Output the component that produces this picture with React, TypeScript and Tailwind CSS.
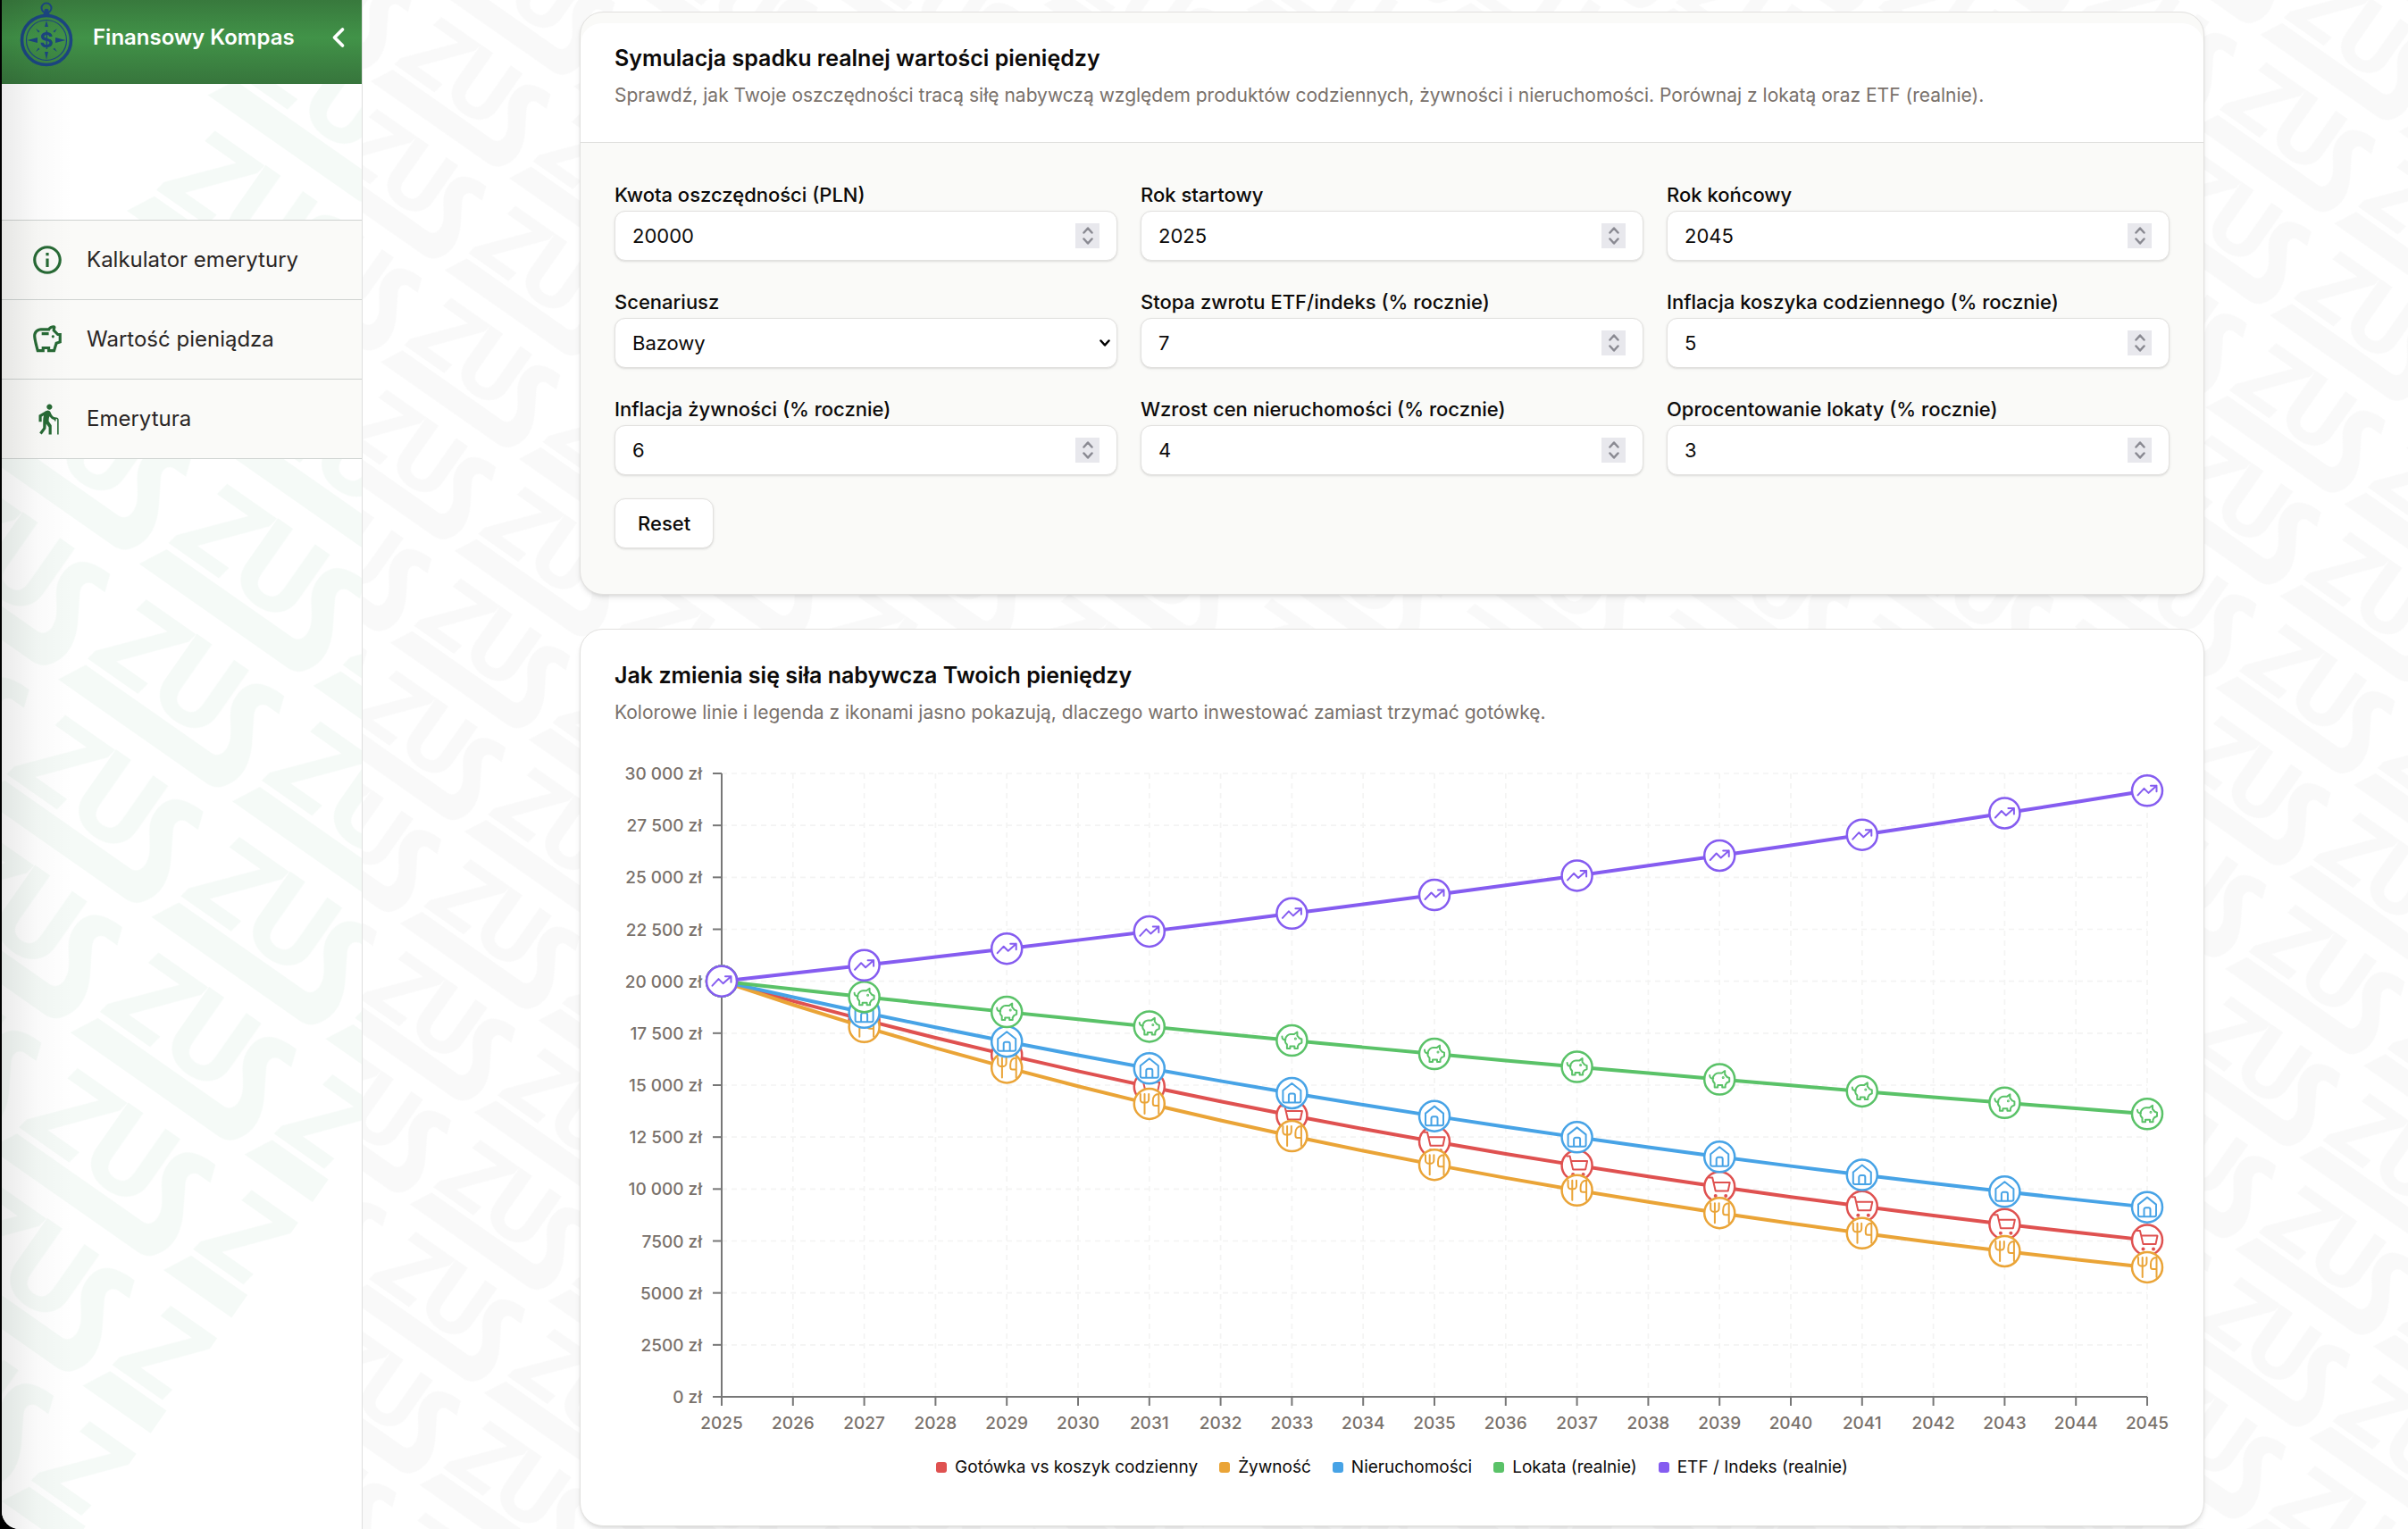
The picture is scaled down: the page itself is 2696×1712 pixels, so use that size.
import { useState } from "react";
import type { ReactNode } from "react";
import { ChevronLeft } from "lucide-react";
import { MdElderly, MdInfoOutline, MdOutlineSavings } from "react-icons/md";

/* ---------- Watermark ---------- */

function WatermarkMark() {
  return (
    <g transform="translate(34 10)">
      <text x="-14" y="92" className="font-[Roboto] text-[129px] font-extrabold italic">
        Z
      </text>
      <text x="61" y="92" className="font-[Roboto] text-[129px] font-extrabold">
        U
      </text>
      <path d="M-14 99H158C168 99 172 88 166 74C158 58 144 50 144 31C144 8 158 -1 188 0L195 20H180C171 20 168 28 172 36L190 66C199 82 202 98 196 112C190 125 184 130 172 130H-30Z" />
    </g>
  );
}

function SidebarWatermark() {
  return (
    <svg aria-hidden="true" className="pointer-events-none absolute inset-0 h-full w-full fill-[#f5faf7]">
      <defs>
        <pattern id="mark-green" x="484" y="289" width="238" height="158" patternUnits="userSpaceOnUse">
          <WatermarkMark />
        </pattern>
      </defs>
      <g transform="rotate(35)">
        <rect x="243" y="-300" width="814" height="2000" fill="url(#mark-green)" />
      </g>
    </svg>
  );
}

function PageWatermark() {
  return (
    <svg aria-hidden="true" className="pointer-events-none absolute inset-0 h-full w-full fill-[#f9f9f9]">
      <defs>
        <pattern
          id="mark-grey"
          x="547"
          y="421"
          width="238"
          height="158"
          patternUnits="userSpaceOnUse"
          patternTransform="rotate(35) scale(0.795)"
        >
          <WatermarkMark />
        </pattern>
      </defs>
      <rect width="100%" height="100%" fill="url(#mark-grey)" />
    </svg>
  );
}

/* ---------- Sidebar ---------- */

function CompassLogo() {
  return (
    <svg viewBox="0 0 60 76" className="h-[76px] w-[60px] shrink-0 text-[#1b4580]" aria-hidden="true">
      <g fill="none" stroke="currentColor">
        <circle cx="30" cy="9" r="5.500" strokeWidth="2" />
        <circle cx="30" cy="45" r="27.500" strokeWidth="3.600" />
        <circle cx="30" cy="45" r="22.500" strokeWidth="1.200" />
      </g>
      <g fill="currentColor">
        <path d="M27.500 11a3 3 0 0 1 5 0v3l2.500 4H25l2.500-4z" />
        <path d="M30 23l2 7h-4zM30 67l2-9h-4zM8.500 45l11.500-3v6zM51.500 45l-11.500-3v6z" />
        <path d="M18 32l4.500 3-1.500 1.500zM42 32l-4.500 3 1.500 1.500zM18 58l4.500-3-1.500-1.500zM42 58l-4.500-3 1.500-1.500z" />
        <text x="30" y="53" textAnchor="middle" className="font-[Inter] text-[23px] font-bold">
          $
        </text>
      </g>
    </svg>
  );
}

const menu: { label: string; icon: ReactNode }[] = [
  { label: "Kalkulator emerytury", icon: <MdInfoOutline /> },
  { label: "Wartość pieniądza", icon: <MdOutlineSavings /> },
  { label: "Emerytura", icon: <MdElderly /> },
];

function Sidebar() {
  return (
    <aside className="relative w-[404px] shrink-0 border-r border-[#dedfde] bg-white">
      <SidebarWatermark />
      <div className="relative flex h-[94px] items-start bg-gradient-to-b from-[#38793d] via-[#419348] via-45% to-[#37753c] pr-2 pl-5">
        <CompassLogo />
        <div className="ml-[22px] flex h-[83px] flex-1 items-center justify-between">
          <span className="text-[24px] font-semibold whitespace-nowrap text-white">Finansowy Kompas</span>
          <button type="button" aria-label="Zwiń menu" className="text-white">
            <ChevronLeft className="size-9" strokeWidth={2.500} />
          </button>
        </div>
      </div>
      <nav className="relative mt-[152px] border-t border-[#cfd3d1]">
        {menu.map((m) => (
          <a
            key={m.label}
            href="#"
            className="flex h-[89px] items-center gap-[25px] border-b border-[#cfd3d1] bg-[#fafaf8] pl-8 text-[24px] text-[#292524]"
          >
            <span className="text-[38px] text-[#276a35]">{m.icon}</span>
            {m.label}
          </a>
        ))}
      </nav>
      <div className="pointer-events-none absolute inset-y-0 left-0 w-20 bg-gradient-to-r from-black/8 via-black/2 to-transparent" />
    </aside>
  );
}

/* ---------- Form ---------- */

function Caret({ up = false }: { up?: boolean }) {
  return (
    <svg
      viewBox="0 0 12 8"
      className="block h-2 w-3"
      fill="none"
      stroke="currentColor"
      strokeWidth="2.500"
      strokeLinecap="round"
      strokeLinejoin="round"
      aria-hidden="true"
    >
      <path d={up ? "M1.500 6.500L6 1.500 10.500 6.500" : "M1.500 1.500L6 6.500 10.500 1.500"} />
    </svg>
  );
}

const control =
  "h-14 w-full rounded-xl border border-[#e2e1df] bg-white px-[19px] text-[22px] text-[#0c0a09] shadow-sm outline-none";

function NumberField({ id, label, initial }: { id: string; label: string; initial: number }) {
  const [value, setValue] = useState(initial);
  return (
    <div className="flex flex-col gap-[6px]">
      <label htmlFor={id} className="text-[22px] leading-6 font-medium text-[#0c0a09]">
        {label}
      </label>
      <div className="relative">
        <input
          id={id}
          type="number"
          value={value}
          onChange={(e) => setValue(Number(e.target.value))}
          className={`${control} [appearance:textfield] [&::-webkit-inner-spin-button]:appearance-none`}
        />
        <div className="absolute inset-y-[14px] right-5 flex w-[27px] flex-col items-center justify-center gap-1 bg-[#e8e8ed] text-[#8a8a92]">
          <button type="button" aria-label={`${label}: zwiększ`} onClick={() => setValue(value + 1)}>
            <Caret up />
          </button>
          <button type="button" aria-label={`${label}: zmniejsz`} onClick={() => setValue(value - 1)}>
            <Caret />
          </button>
        </div>
      </div>
    </div>
  );
}

function ScenarioField() {
  return (
    <div className="flex flex-col gap-[6px]">
      <label htmlFor="scenario" className="text-[22px] leading-6 font-medium text-[#0c0a09]">
        Scenariusz
      </label>
      <div className="relative">
        <select id="scenario" className={`${control} appearance-none`}>
          <option>Bazowy</option>
          <option>Optymistyczny</option>
          <option>Pesymistyczny</option>
        </select>
        <div className="pointer-events-none absolute inset-y-0 right-2 flex items-center text-black">
          <Caret />
        </div>
      </div>
    </div>
  );
}

function SimulationCard() {
  return (
    <section className="rounded-[26px] border border-[#e2e1df] bg-[#fafaf8] pt-3 shadow-md">
      <header className="rounded-t-[24px] border-b border-[#e0e0de] bg-white px-[38px] pt-[26px] pb-[36px]">
        <h2 className="text-[25px] leading-[26px] font-semibold text-[#0c0a09]">
          Symulacja spadku realnej wartości pieniędzy
        </h2>
        <p className="mt-[13px] text-[21px] leading-8 text-[#79716b]">
          Sprawdź, jak Twoje oszczędności tracą siłę nabywczą względem produktów codziennych, żywności i nieruchomości.
          Porównaj z lokatą oraz ETF (realnie).
        </p>
      </header>
      <form className="px-[38px] pt-[46px] pb-[51px]" onSubmit={(e) => e.preventDefault()}>
        <div className="grid grid-cols-3 gap-x-[26px] gap-y-[34px]">
          <NumberField id="amount" label="Kwota oszczędności (PLN)" initial={20000} />
          <NumberField id="start" label="Rok startowy" initial={2025} />
          <NumberField id="end" label="Rok końcowy" initial={2045} />
          <ScenarioField />
          <NumberField id="etf" label="Stopa zwrotu ETF/indeks (% rocznie)" initial={7} />
          <NumberField id="basket" label="Inflacja koszyka codziennego (% rocznie)" initial={5} />
          <NumberField id="food" label="Inflacja żywności (% rocznie)" initial={6} />
          <NumberField id="property" label="Wzrost cen nieruchomości (% rocznie)" initial={4} />
          <NumberField id="deposit" label="Oprocentowanie lokaty (% rocznie)" initial={3} />
        </div>
        <button
          type="reset"
          className="mt-[26px] h-14 rounded-xl border border-[#e2e1df] bg-white px-[25px] text-[22px] font-medium text-[#0c0a09] shadow-sm"
        >
          Reset
        </button>
      </form>
    </section>
  );
}

/* ---------- Chart ---------- */

const START = 2025;
const YEARS = Array.from({ length: 21 }, (_, i) => i);
const LEFT = 120;
const RIGHT = 1716;
const TOP = 26;
const BOTTOM = 724;
const MAX = 30000;

const px = (i: number) => LEFT + ((RIGHT - LEFT) * i) / 20;
const py = (v: number) => BOTTOM - ((BOTTOM - TOP) * v) / MAX;

type Series = { name: string; color: string; swatch: string; factor: number; icon: ReactNode };

const series: Series[] = [
  {
    name: "Gotówka vs koszyk codzienny",
    color: "#df5150",
    swatch: "bg-[#df5150]",
    factor: 1 / 1.05,
    icon: (
      <>
        <path d="M-11.500-10.500h3.500l3.500 15H9.500l2-9.500H-6.500" />
        <circle cx="-4.500" cy="10" r="2" fill="currentColor" stroke="none" />
        <circle cx="7" cy="10" r="2" fill="currentColor" stroke="none" />
      </>
    ),
  },
  {
    name: "Żywność",
    color: "#eaa437",
    swatch: "bg-[#eaa437]",
    factor: 1 / 1.06,
    icon: (
      <path d="M-10-11v6c0 2 1.500 3.500 3 3.500h3.400c1.500 0 3-1.500 3-3.500v-6M-5.300-11v22M10.500-11v22M10.500-11c-4 0-6.500 3-6.500 7.500v3c0 1.500 1 2.500 2.500 2.500h4" />
    ),
  },
  {
    name: "Nieruchomości",
    color: "#47a3e6",
    swatch: "bg-[#47a3e6]",
    factor: 1 / 1.04,
    icon: (
      <path d="M-10-3L0-11 10-3V8.500a2 2 0 0 1-2 2H-8a2 2 0 0 1-2-2zM-3.500 10.500V2.500a2 2 0 0 1 2-2h3a2 2 0 0 1 2 2v8" />
    ),
  },
  {
    name: "Lokata (realnie)",
    color: "#5ac268",
    swatch: "bg-[#5ac268]",
    factor: 1.03 / 1.05,
    icon: (
      <>
        <path d="M-11-4.500c0 2.500 1.500 4 4 3.500M-7.500-1C-7-5-3.500-7-1.500-7H2.500L6-9.500V-5.500L8.500-2.500 11-1.500V2.500L8 4 6.500 6.500V9H3V6.500H-2V9H-5.500V4.500C-7 3-8 1-7.500-1Z" />
        <circle cx="4" cy="-2" r="0.500" fill="currentColor" />
      </>
    ),
  },
  {
    name: "ETF / Indeks (realnie)",
    color: "#855cf0",
    swatch: "bg-[#855cf0]",
    factor: 1.07 / 1.05,
    icon: <path d="M-10.500 5L-3.500-2.500 1.500 2.500 10.500-5.500M4-5.500H10.500V1" />,
  },
];

const formatPln = (v: number) =>
  `${v >= 10000 ? `${Math.floor(v / 1000)}\u00a0${String(v % 1000).padStart(3, "0")}` : v} zł`;

function Chart() {
  const ticks = Array.from({ length: 13 }, (_, i) => i * 2500);
  return (
    <svg
      viewBox="0 0 1741 770"
      className="block h-auto w-full font-[Inter]"
      role="img"
      aria-label="Siła nabywcza w latach 2025–2045"
    >
      <g stroke="#f4f4f3" strokeWidth="1.700" strokeDasharray="6 5">
        {ticks.slice(1).map((t) => (
          <line key={t} x1={LEFT} x2={RIGHT} y1={py(t)} y2={py(t)} />
        ))}
        {YEARS.slice(1).map((i) => (
          <line key={i} x1={px(i)} x2={px(i)} y1={TOP} y2={BOTTOM} />
        ))}
      </g>
      <g stroke="#777777" strokeWidth="2">
        <line x1={LEFT} x2={LEFT} y1={TOP} y2={BOTTOM} />
        <line x1={LEFT} x2={RIGHT} y1={BOTTOM} y2={BOTTOM} />
        {ticks.map((t) => (
          <line key={t} x1={LEFT - 10} x2={LEFT} y1={py(t)} y2={py(t)} />
        ))}
        {YEARS.map((i) => (
          <line key={i} x1={px(i)} x2={px(i)} y1={BOTTOM} y2={BOTTOM + 10} />
        ))}
      </g>
      <g className="fill-[#79716b] text-[19px] font-medium">
        {ticks.map((t) => (
          <text key={t} x={LEFT - 22} y={py(t) + 7} textAnchor="end">
            {formatPln(t)}
          </text>
        ))}
        {YEARS.map((i) => (
          <text key={i} x={px(i)} y={BOTTOM + 36} textAnchor="middle">
            {START + i}
          </text>
        ))}
      </g>
      {series.map((s) => (
        <g key={s.name}>
          <polyline
            fill="none"
            stroke={s.color}
            strokeWidth="4"
            points={YEARS.map((i) => `${px(i)},${py(20000 * s.factor ** i)}`).join(" ")}
          />
          {YEARS.filter((i) => i % 2 === 0).map((i) => (
            <g
              key={i}
              transform={`translate(${px(i)} ${py(20000 * s.factor ** i)})`}
              color={s.color}
              fill="none"
              stroke="currentColor"
              strokeLinecap="round"
              strokeLinejoin="round"
            >
              <circle r="17" fill="white" strokeWidth="2.500" />
              <g strokeWidth="2">{s.icon}</g>
            </g>
          ))}
        </g>
      ))}
    </svg>
  );
}

function ChartCard() {
  return (
    <section className="rounded-[26px] border border-[#e2e1df] bg-white px-[38px] pt-[38px] pb-[53px] shadow-md">
      <h2 className="text-[25px] leading-[26px] font-semibold text-[#0c0a09]">
        Jak zmienia się siła nabywcza Twoich pieniędzy
      </h2>
      <p className="mt-[13px] mb-[26px] text-[21px] leading-8 text-[#79716b]">
        Kolorowe linie i legenda z ikonami jasno pokazują, dlaczego warto inwestować zamiast trzymać gotówkę.
      </p>
      <Chart />
      <ul className="mt-[21px] flex justify-center gap-6 text-[19px] leading-6 text-[#0c0a09]">
        {series.map((s) => (
          <li key={s.name} className="flex items-center gap-[9px]">
            <span className={`size-3 rounded-[3px] ${s.swatch}`} />
            {s.name}
          </li>
        ))}
      </ul>
    </section>
  );
}

export default function App() {
  return (
    <div className="bg-black pl-[2px] font-[Inter,sans-serif] antialiased">
      <div className="flex min-h-screen overflow-hidden rounded-bl-[20px] bg-white">
        <Sidebar />
        <main className="relative flex-1">
          <PageWatermark />
          <div className="relative flex flex-col gap-[38px] pt-[13px] pr-[228px] pl-[243px]">
            <SimulationCard />
            <ChartCard />
          </div>
        </main>
      </div>
    </div>
  );
}
